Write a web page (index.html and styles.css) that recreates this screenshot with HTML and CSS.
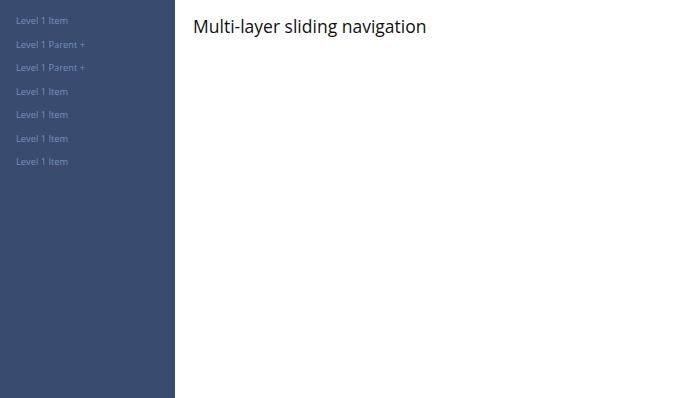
FILE: index.html
```html
<!DOCTYPE html>
<html lang="en">
<head>
  <meta charset="utf-8">
  <title>Multi-layer sliding navigation</title>
  <link rel="stylesheet" href="styles.css">
</head>
<body>
  <nav class="sidebar">
    <ul class="menu">
      <li><a href="#">Level 1 Item</a></li>
      <li><a href="#">Level 1 Parent +</a></li>
      <li><a href="#">Level 1 Parent +</a></li>
      <li><a href="#">Level 1 Item</a></li>
      <li><a href="#">Level 1 Item</a></li>
      <li><a href="#">Level 1 Item</a></li>
      <li><a href="#">Level 1 Item</a></li>
    </ul>
  </nav>
  <main class="content">
    <h1>Multi-layer sliding navigation</h1>
  </main>
</body>
</html>
```
FILE: styles.css
```css
html, body { height: 100%; }
body {
  margin: 0;
  display: flex;
  font-family: "Open Sans", sans-serif;
  background-color: #fff;
  color: #111;
}
.sidebar {
  width: 175px;
  flex-shrink: 0;
  background-color: #394c70;
}
.menu { list-style: none; margin: 0; padding: 10px 0 0; }
.menu li { height: 23.5px; }
.menu a {
  display: block;
  padding: 4px 16px;
  font-size: 9.3px;
  line-height: 14px;
  color: #7390bd;
  text-decoration: none;
}
.content { flex: 1; padding: 0 18px; }
h1 { font-size: 17.5px; font-weight: 400; margin: 14px 0 0; line-height: 24px; }
```
